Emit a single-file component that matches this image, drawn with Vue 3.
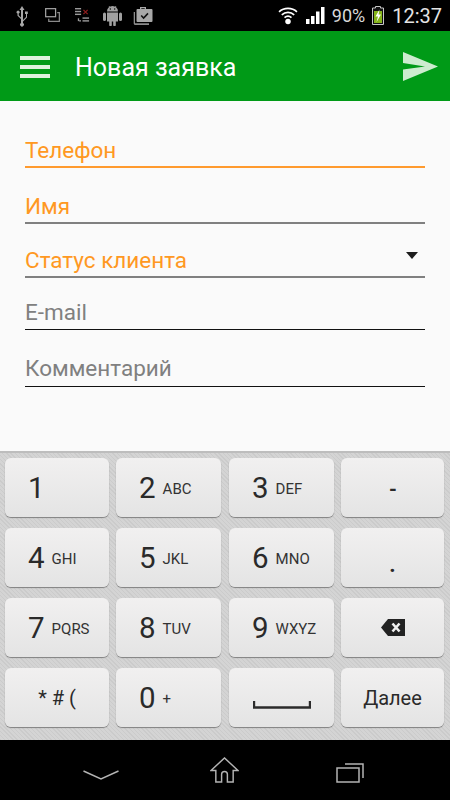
<template>
  <div class="screen">
    <div class="status-bar">
      <div class="status-left">
        <svg class="ic usb" viewBox="0 0 14 22"><path d="M7 1 L9.5 5 H8 V15 L11 12 V9 H10 V6.5 H12.8 V9 H12 V12.6 L8 16.6 V18 A1.9 1.9 0 1 1 6 18 V14 L2.5 10.8 V8.5 A1.5 1.5 0 1 1 3.7 8.5 V10.2 L6 12.4 V5 H4.5 Z" fill="#a8a8a8"/></svg>
        <svg class="ic windows" viewBox="0 0 16 15"><rect x="0.7" y="0.7" width="10.6" height="8.6" fill="none" stroke="#a4a4a4" stroke-width="1.3"/><path d="M13 5 H15.3 V14.3 H4 V11.5" fill="none" stroke="#8a8a8a" stroke-width="1.3"/></svg>
        <svg class="ic tasks" viewBox="0 0 16 17"><g fill="#9a9a9a"><rect x="0" y="0" width="6.5" height="1.5"/><rect x="0" y="3" width="6.5" height="1.5"/><rect x="0" y="6" width="6.5" height="1.5"/><rect x="8" y="10" width="7" height="1.5"/><rect x="8" y="13" width="7" height="1.5"/><rect x="8" y="16" width="7" height="1.5"/><rect x="3" y="11" width="1.4" height="3"/><rect x="4.4" y="13" width="2" height="1.4"/></g><path d="M9 2 L13.5 6.5 M13.5 2 L9 6.5" stroke="#8c1c1c" stroke-width="1.4"/></svg>
        <svg class="ic android" viewBox="0 0 19 21"><g fill="#a0a0a0"><path d="M4 6.5 A5.5 5.5 0 0 1 15 6.5 Z"/><rect x="0" y="7.5" width="3" height="8.5" rx="1.5"/><rect x="16" y="7.5" width="3" height="8.5" rx="1.5"/><path d="M4 7.5 H15 V16.5 H12.8 V20 A1.3 1.3 0 0 1 10.2 20 V16.5 H8.8 V20 A1.3 1.3 0 0 1 6.2 20 V16.5 H4 Z"/></g><path d="M6 1 L7.4 3 M13 1 L11.6 3" stroke="#a0a0a0" stroke-width="0.8"/><circle cx="7.3" cy="4" r="0.7"/><circle cx="11.7" cy="4" r="0.7"/></svg>
        <svg class="ic briefcase" viewBox="0 0 20 20"><path d="M2 17.2 H16 V19 H2 A1.5 1.5 0 0 1 0.7 17.5 V6 H2 Z" fill="#8c8c8c"/><path d="M7 3 V1 H13 V3 H18.5 A1 1 0 0 1 19.5 4 V15 A1 1 0 0 1 18.5 16 H4.5 A1 1 0 0 1 3.5 15 V4 A1 1 0 0 1 4.5 3 Z M8.3 3 H11.7 V2.2 H8.3 Z" fill="#a8a8a8" fill-rule="evenodd"/><path d="M8.2 9.5 L10.6 12 L15 7.4" fill="none" stroke="#111" stroke-width="1.6"/></svg>
      </div>
      <div class="status-right">
        <svg class="wifi" viewBox="0 0 19 19"><g fill="none" stroke="#fff" stroke-width="1.6"><path d="M1 5.6 C5.7 1.2 13.3 1.2 18 5.6"/><path d="M3.6 8.4 C7 5.2 12 5.2 15.4 8.4"/><path d="M6.2 11 C8.2 9.3 10.8 9.3 12.8 11"/></g><circle cx="9.5" cy="14.8" r="2.6" fill="#fff"/></svg>
        <svg class="signal" viewBox="0 0 19 17"><g fill="#fff"><rect x="0" y="12" width="3.5" height="5"/><rect x="5" y="9" width="3.5" height="8"/><rect x="10" y="4.5" width="3.5" height="12.5"/><rect x="15" y="0" width="3.5" height="17"/></g></svg>
        <span class="battery-text">90%</span>
        <svg class="battery" viewBox="0 0 12 19"><path d="M3.5 0.5 H8.5 V2 H11.5 V18.5 H0.5 V2 H3.5 Z" fill="#111" stroke="#c8c8c8" stroke-width="1"/><rect x="2" y="5" width="8" height="12" fill="#86b51a"/><path d="M7.5 3.5 L3.5 10.5 H6 L4.5 16 L9 8.5 H6.5 Z" fill="#fff"/></svg>
        <span class="clock">12:37</span>
      </div>
    </div>

    <header class="app-bar">
      <div class="menu-icon"><span></span><span></span><span></span></div>
      <h1 class="title">Новая заявка</h1>
      <svg class="send" viewBox="0 0 35 29"><path d="M0 0 L35 14.5 L0 29 L0 17.5 L22 14.5 L0 11 Z" fill="#cdeccf"/></svg>
    </header>

    <main class="form">
      <div v-for="f in fields" :key="f.label" class="field" :class="f.cls">
        <span>{{ f.label }}</span>
        <i v-if="f.select" class="caret"></i>
      </div>
    </main>

    <section class="keyboard">
      <div class="keys">
        <button v-for="k in keys" :key="k.id" class="key" :class="k.cls">
          <template v-if="k.num">
            <span class="num">{{ k.num }}</span>
            <span v-if="k.sub" class="sub">{{ k.sub }}</span>
          </template>
          <span v-else-if="k.text" class="txt">{{ k.text }}</span>
          <svg v-else-if="k.id === 'back'" class="back" viewBox="0 0 24 17"><path d="M7 0 H24 V17 H7 L0 8.5 Z" fill="#222"/><path d="M11.5 4.5 L18.5 12.5 M18.5 4.5 L11.5 12.5" stroke="#eee" stroke-width="2.6"/></svg>
          <svg v-else-if="k.id === 'space'" class="space" viewBox="0 0 58 8"><path d="M1 0 V6.5 H57 V0" fill="none" stroke="#2b2b2b" stroke-width="2.4"/></svg>
        </button>
      </div>
    </section>

    <nav class="nav-bar">
      <svg class="nav-back" viewBox="0 0 36 10"><path d="M0.5 1 L18 9 L35.5 1" fill="none" stroke="#b4b4b4" stroke-width="1.4"/></svg>
      <svg class="nav-home" viewBox="0 0 30 27"><path d="M1 14 L15 1 L29 14 H24 V26 H18 V18 A3 3 0 0 0 12 18 V26 H6 V14 Z" fill="none" stroke="#b4b4b4" stroke-width="1.5"/></svg>
      <svg class="nav-recent" viewBox="0 0 28 20"><rect x="1" y="5" width="22" height="14" fill="none" stroke="#b4b4b4" stroke-width="1.5"/><path d="M9 1 H27 V15" fill="none" stroke="#b4b4b4" stroke-width="1.5"/></svg>
    </nav>
  </div>
</template>

<script setup>
const fields = [
  { label: 'Телефон', cls: 'focus' },
  { label: 'Имя', cls: 'req name' },
  { label: 'Статус клиента', cls: 'req sel', select: true },
  { label: 'E-mail', cls: 'em' },
  { label: 'Комментарий', cls: 'cm' }
]

const keys = [
  { id: '1', num: '1', cls: 'one' },
  { id: '2', num: '2', sub: 'ABC' },
  { id: '3', num: '3', sub: 'DEF' },
  { id: 'dash', text: '-', cls: 'sym dash' },
  { id: '4', num: '4', sub: 'GHI' },
  { id: '5', num: '5', sub: 'JKL' },
  { id: '6', num: '6', sub: 'MNO' },
  { id: 'dot', text: '.', cls: 'sym dot' },
  { id: '7', num: '7', sub: 'PQRS' },
  { id: '8', num: '8', sub: 'TUV' },
  { id: '9', num: '9', sub: 'WXYZ' },
  { id: 'back', cls: 'center' },
  { id: 'star', text: '* # (', cls: 'center star' },
  { id: '0', num: '0', sub: '+' },
  { id: 'space', cls: 'center' },
  { id: 'next', text: 'Далее', cls: 'center next' }
]
</script>

<style>
html, body { margin: 0; background: #000; }
</style>

<style scoped>
.screen { width: 450px; height: 800px; display: flex; flex-direction: column; font-family: Roboto, "Liberation Sans", sans-serif; overflow: hidden; }

.status-bar { height: 31px; background: #000; display: flex; justify-content: space-between; align-items: center; flex: none; }
.status-left { display: flex; align-items: center; padding-left: 15px; }
.ic { display: block; height: auto; }
.usb { width: 14px; }
.windows { width: 15px; margin-left: 16px; }
.tasks { width: 15px; margin-left: 15px; }
.android { width: 19px; margin-left: 13px; }
.briefcase { width: 20px; margin-left: 11px; }
.status-right { display: flex; align-items: center; padding-right: 8px; }
.wifi { width: 20px; height: 20px; }
.signal { width: 19px; height: 17px; margin-left: 8px; }
.battery-text { color: #d8d8d8; font-size: 18px; margin-left: 7px; }
.battery { width: 12px; height: 19px; margin-left: 7px; }
.clock { color: #e4e4e4; font-size: 20px; margin-left: 8px; }

.app-bar { height: 70px; background: #009a17; display: flex; align-items: center; flex: none; padding: 1px 12px 0 20px; box-sizing: border-box; }
.menu-icon { width: 30px; display: flex; flex-direction: column; gap: 5px; }
.menu-icon span { height: 4px; background: #dcf2dc; display: block; }
.title { margin: 2px 0 0 25px; font-size: 25px; font-weight: 400; color: #fff; flex: 1; }
.send { width: 35px; height: 29px; }

.form { height: 350px; background: #fafafa; flex: none; padding: 0 25px; box-sizing: border-box; }
.field { height: 52px; box-sizing: border-box; border-bottom: 1px solid #111; font-size: 22.5px; color: #808080; display: flex; align-items: flex-end; justify-content: space-between; padding-bottom: 4px; }
.field.focus { height: 67px; border-bottom: 2px solid #ff9a2e; color: #ff9822; padding-bottom: 3px; }
.field.req { color: #ff9822; border-bottom: 2px solid #808080; padding-bottom: 3px; }
.field.name { height: 56px; }
.field.sel { height: 54px; }
.field.cm { height: 57px; padding-bottom: 5px; }
.caret { align-self: flex-start; margin: 28px 7px 0 0; width: 0; height: 0; border-left: 6px solid transparent; border-right: 6px solid transparent; border-top: 7px solid #1c1c1c; }

.keyboard { height: 289px; flex: none; box-sizing: border-box; padding: 5px 0 0 5px; border-top: 2px solid #bdbdbd; background: repeating-linear-gradient(45deg, #cbcbcb 0 1px, #d4d4d4 1px 3px); }
.keys { display: grid; grid-template-columns: 104px 106px 105px 103px; grid-auto-rows: 59px; column-gap: 7px; row-gap: 11px; }
.key { border: none; padding: 3px 0 0 23px; margin: 0; border-radius: 6px; background: linear-gradient(#f1f0f0, #e4e4e4); box-shadow: 0 1px 1px #808080; display: flex; align-items: center; gap: 7px; font-family: inherit; color: #2a2a2a; }
.key:nth-child(4n+2) { margin-right: 1px; }
.key.center, .key.sym { padding: 0; justify-content: center; }
.key.dash { padding: 3px 0 0 1px; }
.num { font-size: 29.5px; line-height: 1; }
.sub { font-size: 15px; color: #333; }
.txt { font-size: 20px; }
.dot { align-items: flex-end; }
.dot .txt { font-size: 22px; font-weight: 700; margin: 0 0 10px 0; }
.sym .txt { font-weight: 700; }
.back { width: 24px; height: 17px; }
.space { width: 58px; height: 8px; margin-top: 15px; }

.nav-bar { flex: 1; background: #000; display: flex; align-items: flex-start; justify-content: space-between; padding: 17px 86px 0 83px; }
.nav-back { width: 36px; height: 10px; margin-top: 13px; }
.nav-home { width: 29px; height: 26px; margin: 0 3px 0 -3px; }
.nav-recent { width: 28px; height: 20px; margin-top: 6px; }
</style>
